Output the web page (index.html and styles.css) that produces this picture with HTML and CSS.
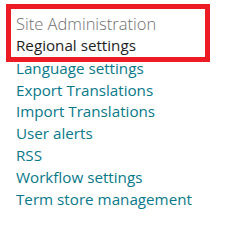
FILE: index.html
```html
<!DOCTYPE html>
<html lang="en">
<head>
    <meta charset="UTF-8">
    <title>Site Settings</title>
    <link rel="stylesheet" href="styles.css">
</head>
<body>
    <div class="settings-group">
        <div class="highlight-box">
            <h3 class="group-title">Site Administration</h3>
            <a href="#" class="current-link">Regional settings</a>
        </div>
        <ul class="group-links">
            <li><a href="#">Language settings</a></li>
            <li><a href="#">Export Translations</a></li>
            <li><a href="#">Import Translations</a></li>
            <li><a href="#">User alerts</a></li>
            <li><a href="#">RSS</a></li>
            <li><a href="#">Workflow settings</a></li>
            <li><a href="#">Term store management</a></li>
        </ul>
    </div>
</body>
</html>
```

FILE: styles.css
```css
* {
    margin: 0;
    padding: 0;
    box-sizing: border-box;
}

body {
    font-family: "Open Sans", "Noto Sans", sans-serif;
    font-size: 15.2px;
    line-height: 21.8px;
    background: #ffffff;
}

.settings-group {
    padding: 4px 0 0 6px;
}

.highlight-box {
    width: 204px;
    border: 5px solid #ed1c24;
    padding: 3px 0 0 5px;
}

.group-title {
    font-size: 16.5px;
    font-weight: 300;
    color: #707070;
    line-height: 23px;
}

.current-link {
    display: block;
    color: #1e1e1e;
    text-decoration: none;
}

/* list runs right up under the red frame */
.group-links {
    list-style: none;
    margin-top: -4px;
    padding-left: 10px;
}

.group-links a {
    color: #08798a;
    text-decoration: none;
}
```
